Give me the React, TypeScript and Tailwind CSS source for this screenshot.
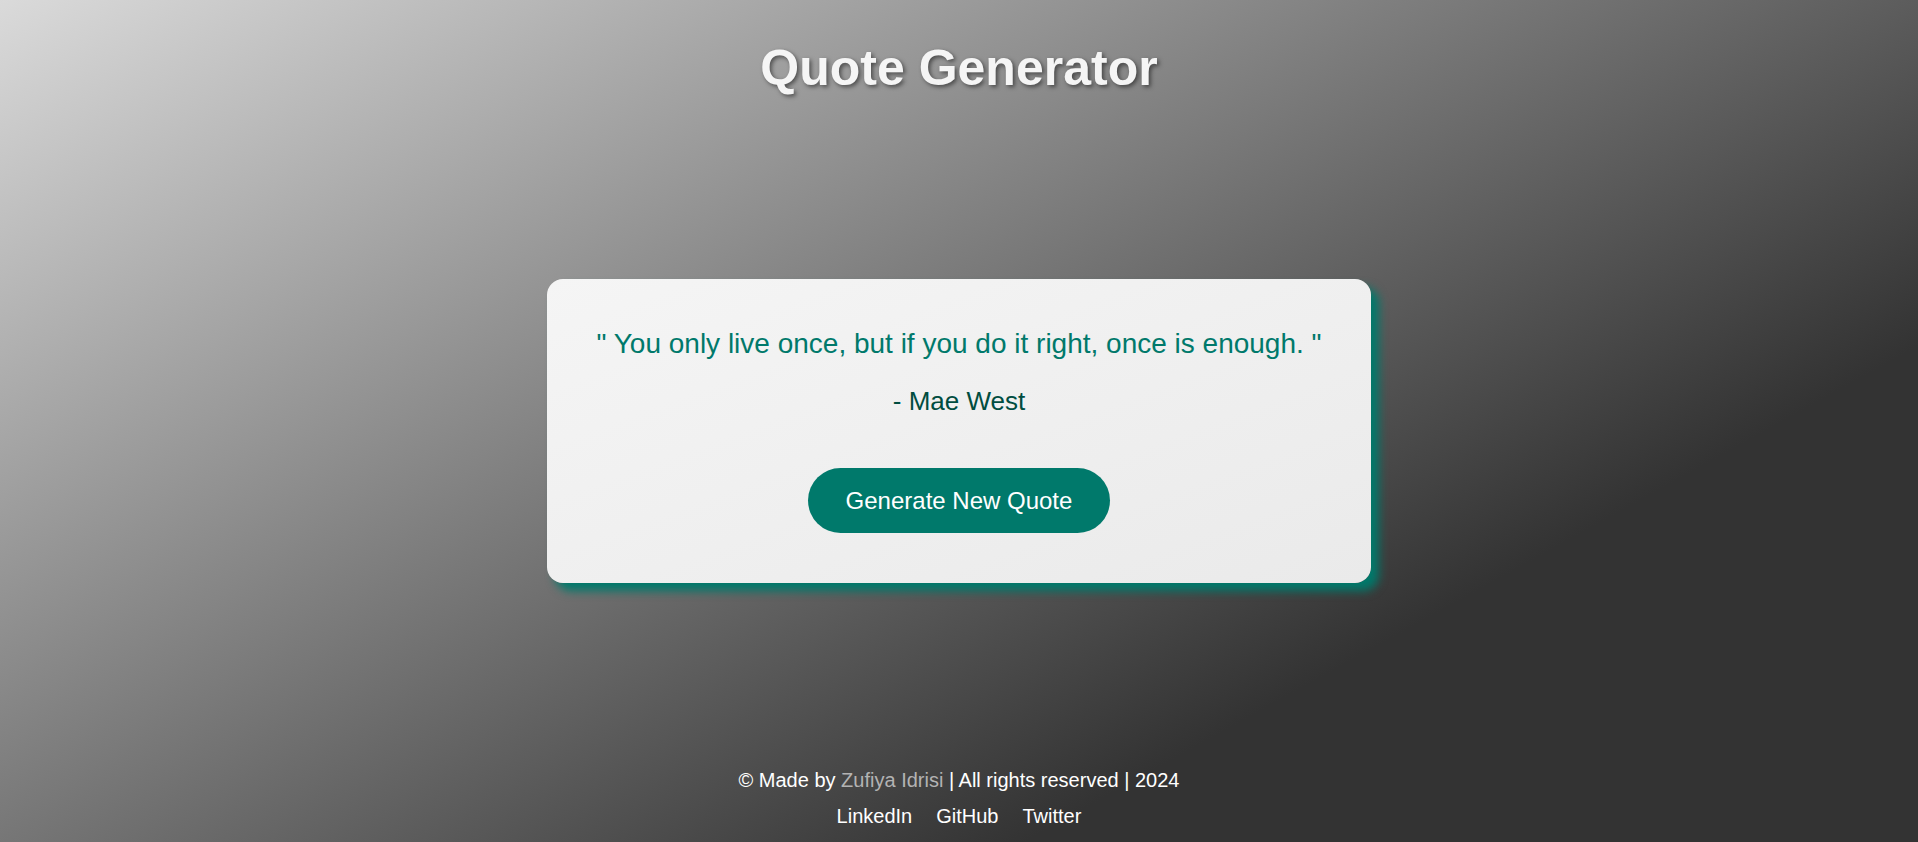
import { useState } from 'react';

const quotes = [
    { text: 'You only live once, but if you do it right, once is enough.', author: 'Mae West' },
    { text: 'Be yourself; everyone else is already taken.', author: 'Oscar Wilde' },
    { text: 'In the middle of difficulty lies opportunity.', author: 'Albert Einstein' },
];

const App = () => {
    const [index, setIndex] = useState(0);
    const quote = quotes[index];

    const nextQuote = () => {
        setIndex((i) => (i + 1) % quotes.length);
    };

    return (
        <div className="min-h-screen flex flex-col font-['Liberation_Sans',Arial,sans-serif] bg-[linear-gradient(151deg,#dadada_0%,#333333_74%)]">
            <header className="pt-[39px] text-center">
                <h1 className="text-[50px] leading-[normal] font-bold text-[#f5f5f5] [text-shadow:2px_2px_4px_rgba(0,0,0,0.5)]">
                    Quote Generator
                </h1>
            </header>

            <main className="flex-1 flex items-center justify-center pb-1">
                <div className="w-fit px-[49px] pt-[49px] pb-[50px] rounded-2xl text-center bg-gradient-to-br from-[#f5f5f5] to-[#eaeaea] shadow-[8px_8px_10px_#00796b]">
                    <p className="text-[28px] leading-[normal] text-[#00796b] whitespace-nowrap">
                        " {quote.text} "
                    </p>
                    <p className="mt-[26px] text-[26px] leading-[normal] text-[#004d40]">
                        - {quote.author}
                    </p>
                    <button
                        onClick={nextQuote}
                        className="mt-[51px] h-[65px] px-[38px] rounded-full bg-[#00796b] text-white text-[24px] leading-[normal] cursor-pointer"
                    >
                        Generate New Quote
                    </button>
                </div>
            </main>

            <footer className="pb-[14px] flex flex-col items-center gap-[13px] text-white text-[20px] leading-[23px]">
                <p>
                    © Made by <span className="text-[#b3b3b3]">Zufiya Idrisi</span> | All rights reserved | 2024
                </p>
                <div className="flex gap-6">
                    <a href="#">LinkedIn</a>
                    <a href="#">GitHub</a>
                    <a href="#">Twitter</a>
                </div>
            </footer>
        </div>
    );
};

export default App;
